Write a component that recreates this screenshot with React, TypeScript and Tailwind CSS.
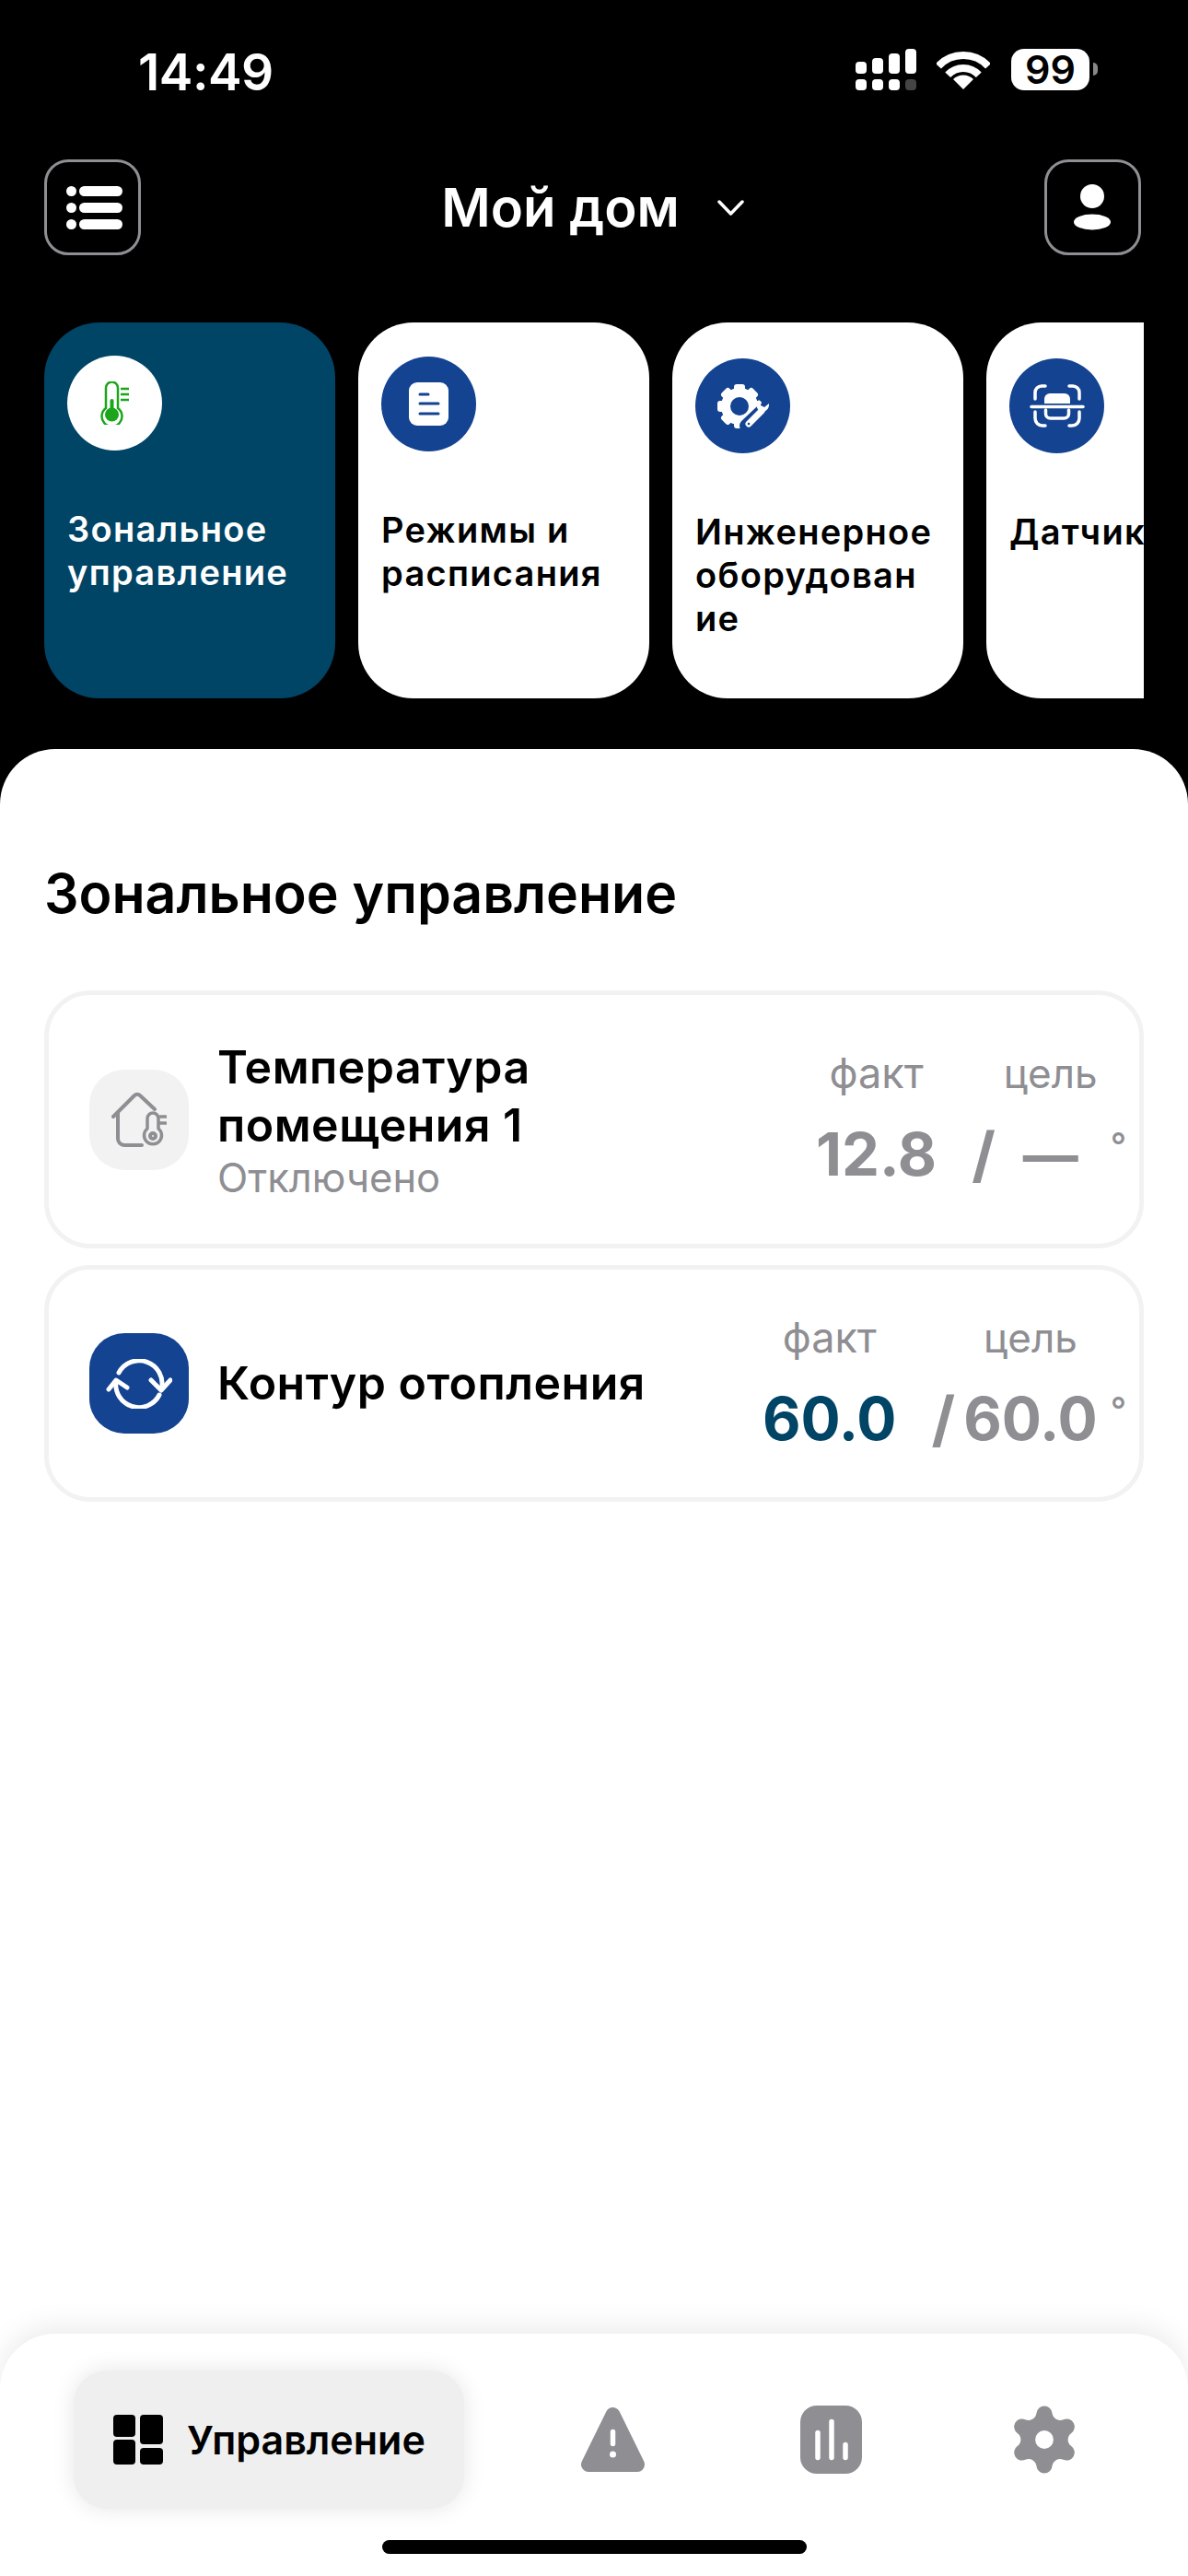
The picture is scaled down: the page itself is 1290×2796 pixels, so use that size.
import { ReactNode } from "react";

const GRAY = "#8e8e93";
const BLUE = "#134391";

function SignalIcon() {
  return (
    <svg width="66" height="55" viewBox="0 0 66 55" fill="#fff">
      <rect x="0" y="14" width="12" height="13" rx="4" />
      <rect x="18" y="10" width="12" height="17" rx="4" />
      <rect x="36" y="5" width="12" height="22" rx="4" />
      <rect x="54" y="0" width="12" height="27" rx="4" />
      <rect x="0" y="33" width="12" height="12" rx="4" />
      <rect x="18" y="33" width="12" height="12" rx="4" />
      <rect x="36" y="33" width="12" height="12" rx="4" />
      <rect x="54" y="33" width="12" height="12" rx="4" fill="#444" />
    </svg>
  );
}

function WifiIcon() {
  return (
    <svg width="58" height="42" viewBox="0 0 58 42" fill="none" stroke="#fff" strokeWidth="8">
      <path d="M2 16.8A37 37 0 0 1 56 16.8" />
      <path d="M12.2 26.3A23 23 0 0 1 45.8 26.3" />
      <path d="M29 42L18 31A15.5 15.5 0 0 1 40 31Z" fill="#fff" stroke="none" />
    </svg>
  );
}

function ListIcon() {
  return (
    <svg width="61" height="47" viewBox="0 0 61 47" fill="#fff">
      <circle cx="5.5" cy="5.5" r="5.5" />
      <circle cx="5.5" cy="23.5" r="5.5" />
      <circle cx="5.5" cy="41.5" r="5.5" />
      <rect x="14" y="0" width="47" height="11" rx="5.5" />
      <rect x="14" y="18" width="47" height="11" rx="5.5" />
      <rect x="14" y="36" width="47" height="11" rx="5.5" />
    </svg>
  );
}

function PersonIcon() {
  return (
    <svg width="40" height="50" viewBox="0 0 40 50" fill="#fff">
      <circle cx="20" cy="13" r="13" />
      <ellipse cx="20" cy="41" rx="20" ry="8.5" />
    </svg>
  );
}

function ThermometerIcon() {
  return (
    <svg width="31" height="47" viewBox="0 0 31 47" fill="none" stroke="#1aa51a" strokeWidth="2.5">
      <path d="M6 29V7a6.5 6.5 0 0 1 13 0v22a11 11 0 1 1-13 0Z" />
      <circle cx="12.5" cy="36" r="7.5" fill="#1aa51a" stroke="none" />
      <rect x="10.5" y="19" width="4" height="14" rx="2" fill="#1aa51a" stroke="none" />
      <path d="M22 8h9M22 14h9M22 20h9" />
    </svg>
  );
}

function DocIcon() {
  return (
    <svg width="43" height="47" viewBox="0 0 43 47">
      <rect width="43" height="47" rx="9" fill="#fff" />
      <path d="M12 13h9M12 23h20M12 34h20" stroke={BLUE} strokeWidth="3" strokeLinecap="round" fill="none" />
    </svg>
  );
}

function EngineeringIcon() {
  const teeth = [0, 45, 90, 135, 180, 225, 270, 315];
  return (
    <svg width="60" height="50" viewBox="0 0 60 50">
      {teeth.map((angle) => (
        <rect key={angle} x="20" y="1" width="12" height="10" rx="3" fill="#fff" transform={`rotate(${angle} 26 25)`} />
      ))}
      <circle cx="26" cy="25" r="15" fill="none" stroke="#fff" strokeWidth="10" />
      <path d="M33 46L51 29" stroke={BLUE} strokeWidth="14" strokeLinecap="round" fill="none" />
      <path d="M36 44L50 30" stroke="#fff" strokeWidth="7" strokeLinecap="round" fill="none" />
      <path d="M47 18a8 8 0 0 0 2 13 8 8 0 0 0 9-9l-5 4-4-2v-4Z" fill="#fff" />
      <circle cx="36" cy="44" r="1.3" fill={BLUE} />
    </svg>
  );
}

function ScannerIcon() {
  return (
    <svg width="60" height="50" viewBox="0 0 60 50" fill="none" stroke="#fff" strokeWidth="3.5" strokeLinecap="round">
      <path d="M6 17V10a7 7 0 0 1 7-7h4M43 3h4a7 7 0 0 1 7 7v7" />
      <path d="M6 31v7a8 8 0 0 0 8 8h3M43 46h3a8 8 0 0 0 8-8v-7" />
      <path d="M2 25.500h56" />
      <path d="M16 22v-5a6 6 0 0 1 6-6h16a6 6 0 0 1 6 6v5Z" fill="#fff" stroke="none" />
      <path d="M17.500 29v4a5 5 0 0 0 5 5h15a5 5 0 0 0 5-5v-4" />
    </svg>
  );
}

function HouseIcon() {
  return (
    <svg width="60" height="60" viewBox="0 0 60 60" fill="none" stroke={GRAY} strokeWidth="4" strokeLinecap="round" strokeLinejoin="round">
      <path d="M2 27L25 4a4 4 0 0 1 6 0L47 19" />
      <path d="M7 23v28a7 7 0 0 0 7 7h19" />
      <path d="M39 40V29a6 6 0 0 1 12 0v11a9.500 9.500 0 1 1-12 0Z" strokeWidth="3.500" />
      <circle cx="45" cy="48" r="3" />
      <path d="M53 27h6M53 34h6" strokeWidth="3.500" />
    </svg>
  );
}

function LoopIcon() {
  return (
    <svg width="72" height="54" viewBox="0 0 72 54" fill="none" stroke="#fff" strokeWidth="5" strokeLinecap="round" strokeLinejoin="round">
      <path d="M14 15A25 25 0 0 1 60.500 32" />
      <path d="M58 39A25 25 0 0 1 11 24" />
      <path d="M3 33l8-10 12 8" />
      <path d="M49 23l11 11 10-11" />
    </svg>
  );
}

function GridIcon() {
  return (
    <svg width="54" height="54" viewBox="0 0 54 54" fill="#000">
      <rect x="0" y="0" width="24" height="24" rx="4" />
      <rect x="0" y="27" width="24" height="27" rx="4" />
      <rect x="29" y="0" width="25" height="32" rx="4" />
      <rect x="29" y="36" width="25" height="18" rx="4" />
    </svg>
  );
}

function AlertIcon() {
  return (
    <svg width="70" height="70" viewBox="0 0 70 70">
      <path d="M34.500 8L8 62H61Z" fill={GRAY} stroke={GRAY} strokeWidth="16" strokeLinejoin="round" />
      <path d="M34.500 26.500V39.500" stroke="#fff" strokeWidth="5.500" strokeLinecap="round" />
      <circle cx="34.500" cy="51" r="3.500" fill="#fff" />
    </svg>
  );
}

function ChartIcon() {
  return (
    <svg width="67" height="74" viewBox="0 0 67 74">
      <rect width="67" height="74" rx="18" fill={GRAY} />
      <path d="M19 29.500V56.500M34 17.500V56.500M49 42.500V56.500" stroke="#fff" strokeWidth="5.500" strokeLinecap="round" />
    </svg>
  );
}

function GearIcon() {
  return (
    <svg width="88" height="88" viewBox="0 0 24 24">
      <path
        fill={GRAY}
        d="M9.671 4.136a2.34 2.34 0 0 1 4.659 0 2.34 2.34 0 0 0 3.319 1.915 2.34 2.34 0 0 1 2.33 4.033 2.34 2.34 0 0 0 0 3.831 2.34 2.34 0 0 1-2.33 4.033 2.34 2.34 0 0 0-3.319 1.915 2.34 2.34 0 0 1-4.659 0 2.34 2.34 0 0 0-3.32-1.915 2.34 2.34 0 0 1-2.33-4.033 2.34 2.34 0 0 0 0-3.831A2.34 2.34 0 0 1 6.35 6.051a2.34 2.34 0 0 0 3.319-1.915"
      />
      <circle cx="12" cy="12" r="2.700" fill="#fff" />
    </svg>
  );
}

interface TileProps {
  label: string;
  icon: ReactNode;
  active?: boolean;
  iconClass: string;
}

function FeatureCard({ label, icon, active = false, iconClass }: TileProps) {
  return (
    <div className={`w-[315.500px] h-[408px] shrink-0 rounded-[60px] pl-[25px] pr-[30px] pt-[36px] ${active ? "bg-[#004466] text-white" : "bg-white text-black"}`}>
      <div className="h-[106px]">
        <div className={`w-[103px] h-[103px] rounded-full flex items-center justify-center ${active ? "bg-white" : "bg-[#134391]"} ${iconClass}`}>
          {icon}
        </div>
      </div>
      <p className="mt-[59px] text-[38px] leading-[47px] font-semibold tracking-[1.300px] break-words">{label}</p>
    </div>
  );
}

export default function App() {
  return (
    <div className="w-[1290px] h-[2796px] flex flex-col bg-black font-['Inter',sans-serif] overflow-hidden">
      {/* status bar */}
      <div className="h-[173px] shrink-0 flex justify-between items-start pl-[150px] pr-[98px] pt-[53px] text-white">
        <span className="text-[55px] leading-[50px] font-semibold tracking-[-0.5px]">14:49</span>
        <div className="flex items-start">
          <SignalIcon />
          <div className="ml-[22px] mt-[2px]">
            <WifiIcon />
          </div>
          <div className="ml-[23px] w-[85px] h-[45px] rounded-[14px] bg-white flex items-center justify-center text-black text-[43px] leading-none font-semibold">
            99
          </div>
          <div className="ml-[4px] mt-[15px] w-[5px] h-[14px] rounded-r-full bg-[#888]" />
        </div>
      </div>

      {/* header */}
      <div className="shrink-0 flex items-center justify-between pl-[48px] pr-[51px]">
        <button className="w-[105px] h-[104px] rounded-[26px] border-[3px] border-[#8e8e93] flex items-center justify-center pl-[4px]">
          <ListIcon />
        </button>
        <div className="flex items-center text-white">
          <span className="text-[58px] leading-[70px] font-semibold">Мой дом</span>
          <svg className="ml-[41px]" width="29" height="17" viewBox="0 0 29 17" fill="none" stroke="#fff" strokeWidth="3.500" strokeLinecap="round" strokeLinejoin="round">
            <path d="M2 2l12.500 13L27 2" />
          </svg>
        </div>
        <button className="w-[105px] h-[104px] rounded-[26px] border-[3px] border-[#8e8e93] flex items-center justify-center">
          <PersonIcon />
        </button>
      </div>

      {/* feature cards */}
      <div className="shrink-0 mx-[48px] mt-[73px] flex gap-[25.500px] overflow-hidden">
        <FeatureCard active label="Зональное управление" icon={<ThermometerIcon />} iconClass="" />
        <FeatureCard label="Режимы и расписания" icon={<DocIcon />} iconClass="mt-[1px]" />
        <FeatureCard label="Инженерное оборудование" icon={<EngineeringIcon />} iconClass="mt-[3px]" />
        <FeatureCard label="Датчики" icon={<ScannerIcon />} iconClass="mt-[3px]" />
      </div>

      {/* sheet */}
      <div className="mt-[55px] flex-1 flex flex-col bg-white rounded-t-[60px]">
        <div className="flex-1 px-[48px] pt-[122px]">
          <h1 className="text-[59px] leading-[70px] font-semibold text-black">Зональное управление</h1>

          <div className="mt-[70px] flex flex-col gap-[18px]">
            <div className="h-[280px] rounded-[50px] border-[5px] border-[#f2f2f2] flex items-center pl-[44px] pr-[14px]">
              <div className="w-[108px] h-[109px] shrink-0 rounded-[38px] bg-[#f2f2f2] flex items-center justify-center">
                <HouseIcon />
              </div>
              <div className="ml-[31px]">
                <p className="text-[50px] leading-[63px] font-semibold tracking-[0.5px] text-black">
                  Температура
                  <br />
                  помещения 1
                </p>
                <p className="text-[43.500px] leading-[50px] text-[#8e8e93]">Отключено</p>
              </div>
              <div className="ml-auto pt-[2px] grid grid-cols-[auto_auto_auto_auto] gap-y-[22px] text-[#8e8e93]">
                <span className="col-start-1 text-center text-[45px] leading-[52px]">факт</span>
                <span className="col-start-3 text-center text-[44px] leading-[52px]">цель</span>
                <span className="row-start-2 col-start-1 text-center text-[65px] leading-[80px] font-bold">12.8</span>
                <span className="row-start-2 col-start-2 pl-[38px] pr-[9px] text-[66px] leading-[80px] font-bold">/</span>
                <span className="row-start-2 col-start-3 text-center text-[60px] leading-[80px] font-bold">—</span>
                <span className="row-start-2 col-start-4 pl-[14px] text-[38px] leading-[60px] font-medium">°</span>
              </div>
            </div>

            <div className="h-[257px] rounded-[50px] border-[5px] border-[#f2f2f2] flex items-center pl-[44px] pr-[14px]">
              <div className="w-[108px] h-[109px] shrink-0 rounded-[38px] bg-[#134391] flex items-center justify-center">
                <LoopIcon />
              </div>
              <p className="ml-[31px] text-[50px] leading-[63px] font-semibold tracking-[0.5px] text-black">Контур отопления</p>
              <div className="ml-auto pt-[2px] grid grid-cols-[auto_auto_auto_auto] gap-y-[22px] text-[#8e8e93]">
                <span className="col-start-1 text-center text-[45px] leading-[52px]">факт</span>
                <span className="col-start-3 text-center text-[44px] leading-[52px]">цель</span>
                <span className="row-start-2 col-start-1 text-center text-[64px] leading-[80px] font-bold text-[#004466]">60.0</span>
                <span className="row-start-2 col-start-2 pl-[38px] pr-[9px] text-[66px] leading-[80px] font-bold">/</span>
                <span className="row-start-2 col-start-3 text-center text-[64px] leading-[80px] font-bold">60.0</span>
                <span className="row-start-2 col-start-4 pl-[14px] text-[38px] leading-[60px] font-medium">°</span>
              </div>
            </div>
          </div>
        </div>

        {/* bottom nav */}
        <div className="h-[263px] shrink-0 flex flex-col rounded-t-[60px] bg-white shadow-[0_-8px_30px_rgba(0,0,0,0.08)] pt-[40px]">
          <div className="flex items-center pl-[80px]">
            <div className="w-[424px] h-[150px] rounded-[36px] bg-[#efefef] shadow-[0_0_24px_rgba(0,0,0,0.1)] flex items-center pl-[43px]">
              <GridIcon />
              <span className="ml-[26px] text-[43px] leading-[50px] font-semibold text-black">Управление</span>
            </div>
            <div className="ml-[45px] w-[234px] flex justify-center">
              <AlertIcon />
            </div>
            <div className="w-[234px] flex justify-center pl-[5px]">
              <ChartIcon />
            </div>
            <div className="w-[234px] flex justify-center">
              <GearIcon />
            </div>
          </div>
          <div className="mt-[34px] w-[461px] h-[15px] self-center rounded-full bg-black" />
        </div>
      </div>
    </div>
  );
}
